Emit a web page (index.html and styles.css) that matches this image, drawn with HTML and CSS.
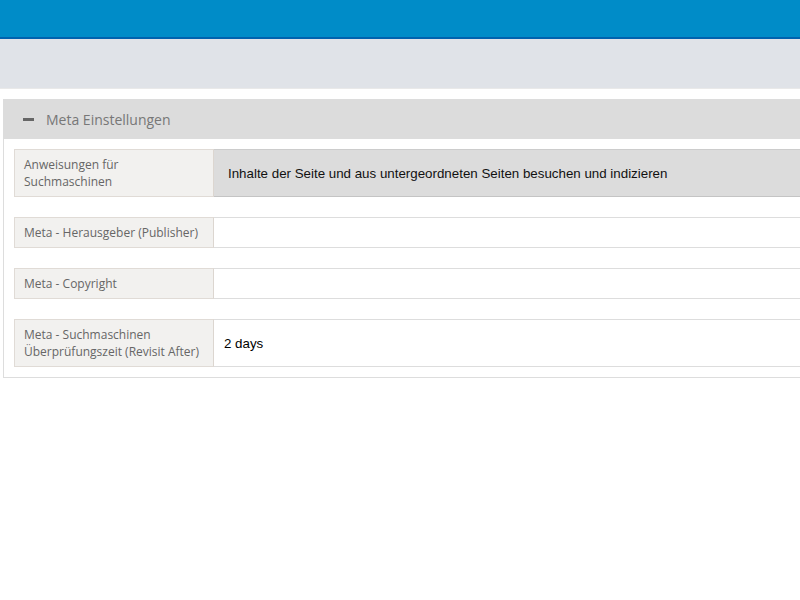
FILE: index.html
```html
<!DOCTYPE html>
<html>
<head>
<meta charset="utf-8">
<link rel="stylesheet" href="styles.css">
</head>
<body>
<div class="topbar"></div>
<div class="subbar"></div>
<div class="page">
  <div class="panel">
    <div class="panel-head">
      <span class="minus"></span>
      <span class="title">Meta Einstellungen</span>
    </div>
    <div class="panel-body">
      <div class="row">
        <div class="label">Anweisungen für<br>Suchmaschinen</div>
        <div class="value select">Inhalte der Seite und aus untergeordneten Seiten besuchen und indizieren</div>
      </div>
      <div class="row">
        <div class="label">Meta - Herausgeber (Publisher)</div>
        <div class="value"></div>
      </div>
      <div class="row">
        <div class="label">Meta - Copyright</div>
        <div class="value"></div>
      </div>
      <div class="row">
        <div class="label">Meta - Suchmaschinen<br>Überprüfungszeit (Revisit After)</div>
        <div class="value">2 days</div>
      </div>
    </div>
  </div>
</div>
</body>
</html>
```
FILE: styles.css
```css
html, body {
  margin: 0;
  padding: 0;
  overflow: hidden;
  background: #fff;
}
body {
  width: 800px;
  font-family: "Open Sans", "Liberation Sans", sans-serif;
}
.topbar {
  height: 37px;
  background: #008cc8;
  border-bottom: 2px solid #0062ae;
}
.subbar {
  height: 49px;
  background: #e0e3e8;
  border-bottom: 1px solid #e9e9e9;
}
.page {
  padding: 10px 0 0 3px;
  width: 1100px;
}
.panel {
  border: 1px solid #dddddd;
  border-top: none;
}
.panel-head {
  height: 40px;
  background: #dcdcdc;
  display: flex;
  align-items: center;
  margin: 0 -1px 0 -1px;
  padding-left: 20px;
}
.minus {
  width: 11px;
  height: 3px;
  background: #666;
  margin-right: 12px;
  margin-top: 1px;
}
.title {
  font-size: 14px;
  color: #777;
}
.panel-body {
  padding: 10px 0 10px 10px;
  display: flex;
  flex-direction: column;
  gap: 20px;
}
.row {
  display: flex;
  align-items: stretch;
}
.label {
  width: 189px;
  flex: none;
  background: #f2f1ef;
  border: 1px solid #e0dbd6;
  border-right: 1px solid #dcd6d0;
  padding: 6px 0 6px 9px;
  font-size: 12px;
  line-height: 17px;
  color: #666;
}
.value {
  flex: 1;
  border-top: 1px solid #dddddd;
  border-bottom: 1px solid #dddddd;
  display: flex;
  align-items: center;
  padding-left: 10px;
  font-family: "Liberation Sans", Arial, sans-serif;
  font-size: 13.33px;
  color: #000;
}
.value.select {
  background: #dcdcdc;
  border-top-color: #cccccc;
  border-bottom-color: #c4c4c4;
  padding-left: 14px;
  color: #111;
}
```
